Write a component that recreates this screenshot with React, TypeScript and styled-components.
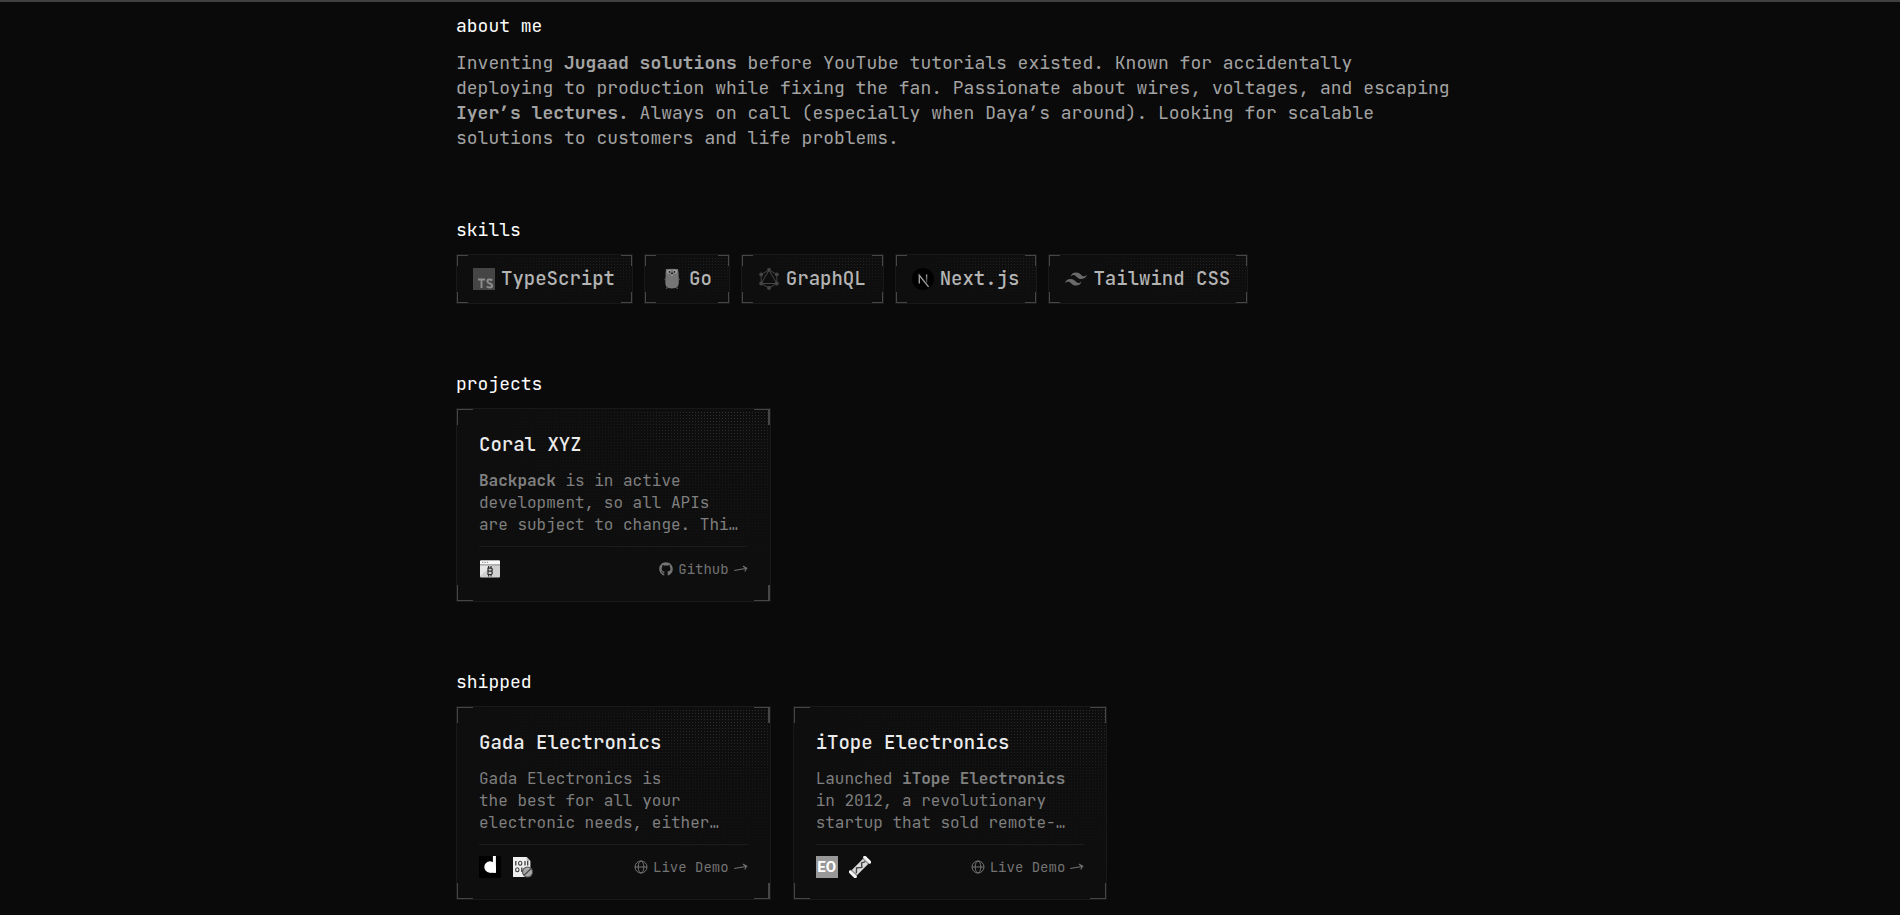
import React from "react";
import styled, { createGlobalStyle } from "styled-components";
import { SiGraphql, SiTailwindcss } from "react-icons/si";
import { FaGithub } from "react-icons/fa";

const Global = createGlobalStyle`
  *, *::before, *::after { box-sizing: border-box; }
  body {
    margin: 0;
    background: #0a0a0a;
    color: #fafafa;
    font-family: "JetBrains Mono", "DejaVu Sans Mono", monospace;
  }
  h2, h3, p, ul { margin: 0; padding: 0; font-weight: 400; }
  ul { list-style: none; }
`;

const Page = styled.div`
  border-top: 2px solid #404040;
`;

const Main = styled.main`
  display: flex;
  flex-direction: column;
  gap: 67px;
  width: 100%;
  max-width: 988px;
  margin: 0 auto;
  padding: 11px 0 13px;
`;

const Section = styled.section`
  display: flex;
  flex-direction: column;
  gap: 11px;
`;

const Heading = styled.h2`
  font-size: 18px;
  line-height: 26px;
  color: #fff;
`;

const Bio = styled.p`
  margin-right: -16px;
  font-size: 18px;
  line-height: 25px;
  color: #a3a3a3;
`;

const Frame = styled.div<{ $corner: number; $dots: string }>`
  --c: #464646;
  --edge: 1px;
  --len: ${(p) => p.$corner}px;
  position: relative;
  border: 1px solid #191919;
  background: #0e0e0e;

  &::before {
    content: "";
    position: absolute;
    inset: 2px 0 0;
    background-image: radial-gradient(circle, #383838 1px, transparent 1px);
    background-size: 3px 3px;
    mask-image: ${(p) => p.$dots};
  }

  &::after {
    content: "";
    position: absolute;
    inset: 0;
    pointer-events: none;
    background:
      linear-gradient(var(--c) 0 0) left top / var(--len) 1px,
      linear-gradient(var(--c) 0 0) left top / 1px var(--len),
      linear-gradient(var(--c) 0 0) right top / var(--len) 1px,
      linear-gradient(var(--c) 0 0) right top / var(--edge) var(--len),
      linear-gradient(var(--c) 0 0) left bottom / var(--len) 1px,
      linear-gradient(var(--c) 0 0) left bottom / 1px var(--len),
      linear-gradient(var(--c) 0 0) right bottom / var(--len) 1px,
      linear-gradient(var(--c) 0 0) right bottom / var(--edge) var(--len);
    background-repeat: no-repeat;
  }
`;

const SkillList = styled.ul`
  display: flex;
  flex-wrap: wrap;
  gap: 11px;
`;

const Chip = styled(Frame)`
  display: flex;
  align-items: center;
  gap: 6px;
  height: 50px;
  padding: 0 17px 0 16px;
  font-size: 19px;
  font-weight: 500;
  line-height: 28px;
  color: #b4b4b4;

  > * { position: relative; }
`;

const CardGrid = styled.div`
  display: grid;
  grid-template-columns: repeat(3, 1fr);
  gap: 22px;
`;

const Card = styled(Frame)`
  padding: 22px 22px 21px;

  &:nth-child(3n + 1) { --edge: 2px; }
  > * { position: relative; }
`;

const CardTitle = styled.h3`
  font-size: 19px;
  font-weight: 500;
  line-height: 28px;
  color: #ebebeb;
`;

const CardText = styled.p`
  margin-top: 11px;
  padding-bottom: 10px;
  border-bottom: 1px solid #1b1b1b;
  font-size: 16px;
  line-height: 22px;
  color: #7f7f7f;
  white-space: nowrap;
`;

const CardFooter = styled.div`
  display: flex;
  align-items: center;
  justify-content: space-between;
  height: 22px;
  margin-top: 11px;
`;

const Stack = styled.div`
  display: flex;
  gap: 11px;
`;

const CardLink = styled.a`
  display: flex;
  align-items: center;
  gap: 5px;
  font-size: 14px;
  line-height: 20px;
  color: #737373;
  text-decoration: none;
`;

const Arrow = () => (
  <svg width="14" height="14" viewBox="0 0 14 14" fill="none" stroke="currentColor" strokeWidth="1.1" strokeLinecap="round" strokeLinejoin="round" aria-hidden="true">
    <path d="M.8 8.4C5 7.7 9 7.1 12.9 6.2M9.3 4.3C10.4 5.2 11.6 5.8 12.9 6.2C12.1 7 11.5 7.8 11 9" />
  </svg>
);

const Globe = () => (
  <svg width="14" height="14" viewBox="0 0 14 14" fill="none" stroke="currentColor" strokeWidth="1" aria-hidden="true">
    <circle cx="7" cy="7" r="6" />
    <ellipse cx="7" cy="7" rx="2.8" ry="6" />
    <path d="M1 7H13" />
  </svg>
);

const TypeScriptIcon = () => (
  <svg width="22" height="22" viewBox="0 0 22 22" aria-hidden="true">
    <rect width="22" height="22" fill="#454545" />
    <path d="M5 11.5H12M8.5 11.5V20" fill="none" stroke="#8e8e8e" strokeWidth="1.9" />
    <path d="M19.2 12.5C17.9 11.2 14.3 10.9 14.3 13.3C14.3 16 19.2 15 19.2 17.7C19.2 20 15.4 19.9 13.8 18.3" fill="none" stroke="#8e8e8e" strokeWidth="1.9" />
  </svg>
);

const GoIcon = () => (
  <svg width="22" height="22" viewBox="0 0 22 22" aria-hidden="true">
    <path d="M5 2.4C4 1.2 5.6.6 6.6 1.4C9 .4 13 .4 15.2 1.4C16.4.6 18 1.3 17 2.6C17.8 4.4 17.6 6 17.6 8C17.7 11.5 18.4 16 16.8 18.6C15 21 7 21.2 5.2 18.6C3.7 15.6 4.5 12 4.6 8.6C4.6 6 4.4 4.4 5 2.4Z" fill="#757575" />
    <path d="M3.6 11.6L4.8 10.8M18.6 11.6L17.2 10.8M6 19.6L5.4 20.8M15.8 19.6L16.6 20.8" stroke="#5f5f5f" strokeWidth="1.4" />
    <circle cx="8" cy="3.6" r="2.3" fill="#989898" />
    <circle cx="14" cy="3.6" r="2.3" fill="#989898" />
    <circle cx="8.6" cy="3.9" r=".9" fill="#191919" />
    <circle cx="13.4" cy="3.9" r=".9" fill="#191919" />
    <ellipse cx="11" cy="5.4" rx="1.2" ry=".8" fill="#222" />
    <path d="M10.3 6.4H11.8V7.8H10.3Z" fill="#aaa" />
  </svg>
);

const NextIcon = () => (
  <svg width="22" height="22" viewBox="0 0 22 22" aria-hidden="true">
    <defs>
      <linearGradient id="nextStem" x1="0" y1="0" x2="0" y2="1">
        <stop offset="0" stopColor="#a0a0a0" />
        <stop offset="1" stopColor="#333" />
      </linearGradient>
    </defs>
    <circle cx="11" cy="11" r="11" fill="#000" />
    <path d="M7.3 15.4V7.2L16.6 18.9" fill="none" stroke="#9c9c9c" strokeWidth="1.4" />
    <rect x="13.9" y="6.5" width="1.4" height="8.4" fill="url(#nextStem)" />
  </svg>
);

const WindowIcon = () => (
  <svg width="22" height="22" viewBox="0 0 22 22" aria-hidden="true">
    <rect x="1" y="2.4" width="20" height="17" rx="1" fill="#cfcfcf" />
    <path d="M1 19.4V18L14 7H1Z" fill="#e6e6e6" />
    <path d="M1 6.4V3.4Q1 2.4 2 2.4H20Q21 2.4 21 3.4V6.4Z" fill="#fafafa" />
    <path d="M1 6.9H21" stroke="#8b8b8b" />
    <path d="M3 4.4H4.4M5.4 4.4H6.8M7.8 4.4H9.2" stroke="#999" strokeWidth="1.3" />
    <path d="M8.4 10.1H12.4L13.2 11V12.4L12.4 13.2L13.2 14V15.6L12.4 16.5H8.4M9 10.1V16.5M9 13.2H12.4M9.6 8V10.1M12 8V10.1M9.6 16.5V18.6M12 16.5V18.6" fill="none" stroke="#2e2e2e" strokeWidth="1.2" />
  </svg>
);

const DIcon = () => (
  <svg width="22" height="22" viewBox="0 0 22 22" aria-hidden="true">
    <rect width="22" height="22" rx="1" fill="#000" />
    <circle cx="11" cy="11" r="5.7" fill="#fff" />
    <rect x="13.9" y="0" width="3" height="16.7" fill="#fff" />
    <rect x="11" y="11" width="5.9" height="5.7" fill="#fff" />
  </svg>
);

const BinaryIcon = () => (
  <svg width="22" height="22" viewBox="0 0 22 22" aria-hidden="true">
    <path d="M1 1H14.6L18.4 5V21H1Z" fill="#efefef" />
    <path d="M14.6 1L18.4 5H14.6Z" fill="#bbb" />
    <path d="M3.8 5V9.4M13 5V9.4M15.7 5V9.4M9.8 11.6V16" stroke="#3c3c3c" strokeWidth="1.3" />
    <ellipse cx="8.2" cy="7.2" rx="1.7" ry="2" fill="none" stroke="#3c3c3c" strokeWidth="1.1" />
    <ellipse cx="5.3" cy="13.7" rx="1.7" ry="2" fill="none" stroke="#3c3c3c" strokeWidth="1.1" />
    <circle cx="15.6" cy="16" r="5" fill="#a8a8a8" stroke="#4c4c4c" strokeWidth="1.1" />
    <path d="M12.3 19L18.9 12.8" stroke="#4c4c4c" strokeWidth="1.3" />
  </svg>
);

const BoltIcon = () => (
  <svg width="22" height="22" viewBox="0 0 22 22" aria-hidden="true">
    <g transform="rotate(-45 11 11)">
      <rect x="2" y="7.4" width="18" height="7.2" fill="#d9d9d9" />
      <path d="M4 12.8L8 9.2L12 12.6L15 9.2L18.5 11" fill="none" stroke="#444" strokeWidth="1.4" />
      <rect x="-.8" y="6" width="3" height="10" rx="1" fill="#f4f4f4" />
      <rect x="19.8" y="6" width="3" height="10" rx="1" fill="#f4f4f4" />
      <path d="M2.9 7V15M19.1 7V15" stroke="#555" strokeWidth=".8" />
    </g>
  </svg>
);

const Monogram = styled.span`
  display: grid;
  place-items: center;
  width: 22px;
  height: 22px;
  background: #989898;
  color: #fff;
  font: 700 15px/22px Roboto, sans-serif;
`;

const chipDots =
  "radial-gradient(ellipse 70% 100% at 80% 0, rgba(0,0,0,.6), transparent)";
const cardDots =
  "radial-gradient(ellipse 85% 90% at 85% 0, rgba(0,0,0,.9), rgba(0,0,0,.3) 40%, transparent)";

const skills = [
  { name: "TypeScript", icon: <TypeScriptIcon /> },
  { name: "Go", icon: <GoIcon /> },
  { name: "GraphQL", icon: <SiGraphql size={22} color="#454545" /> },
  { name: "Next.js", icon: <NextIcon /> },
  { name: "Tailwind CSS", icon: <SiTailwindcss size={22} color="#6a6a6a" /> },
];

type ProjectProps = {
  title: string;
  lines: React.ReactNode[];
  stack: React.ReactNode;
  link: "Github" | "Live Demo";
};

const Project = ({ title, lines, stack, link }: ProjectProps) => (
  <Card as="article" $corner={16} $dots={cardDots}>
    <CardTitle>{title}</CardTitle>
    <CardText>
      {lines.map((line, i) => (
        <React.Fragment key={i}>
          {i > 0 && <br />}
          {line}
        </React.Fragment>
      ))}
    </CardText>
    <CardFooter>
      <Stack>{stack}</Stack>
      <CardLink href="#">
        {link === "Github" ? <FaGithub size={14} /> : <Globe />}
        {link}
        <Arrow />
      </CardLink>
    </CardFooter>
  </Card>
);

export default function App() {
  return (
    <Page>
      <Global />
      <Main>
        <Section>
          <Heading>about me</Heading>
          <Bio>
            Inventing <strong>Jugaad solutions</strong> before YouTube tutorials existed. Known for
            accidentally deploying to production while fixing the fan. Passionate about wires,
            voltages, and escaping <strong>Iyer’s lectures.</strong> Always on call (especially when
            Daya’s around). Looking for scalable solutions to customers and life problems.
          </Bio>
        </Section>

        <Section>
          <Heading>skills</Heading>
          <SkillList>
            {skills.map((s) => (
              <Chip as="li" key={s.name} $corner={11} $dots={chipDots}>
                {s.icon}
                <span>{s.name}</span>
              </Chip>
            ))}
          </SkillList>
        </Section>

        <Section>
          <Heading>projects</Heading>
          <CardGrid>
            <Project
              title="Coral XYZ"
              lines={[
                <><strong>Backpack</strong> is in active</>,
                "development, so all APIs",
                "are subject to change. Thi…",
              ]}
              stack={<WindowIcon />}
              link="Github"
            />
          </CardGrid>
        </Section>

        <Section>
          <Heading>shipped</Heading>
          <CardGrid>
            <Project
              title="Gada Electronics"
              lines={["Gada Electronics is", "the best for all your", "electronic needs, either…"]}
              stack={<><DIcon /><BinaryIcon /></>}
              link="Live Demo"
            />
            <Project
              title="iTope Electronics"
              lines={[
                <>Launched <strong>iTope Electronics</strong></>,
                "in 2012, a revolutionary",
                "startup that sold remote-…",
              ]}
              stack={<><Monogram>EO</Monogram><BoltIcon /></>}
              link="Live Demo"
            />
          </CardGrid>
        </Section>
      </Main>
    </Page>
  );
}
